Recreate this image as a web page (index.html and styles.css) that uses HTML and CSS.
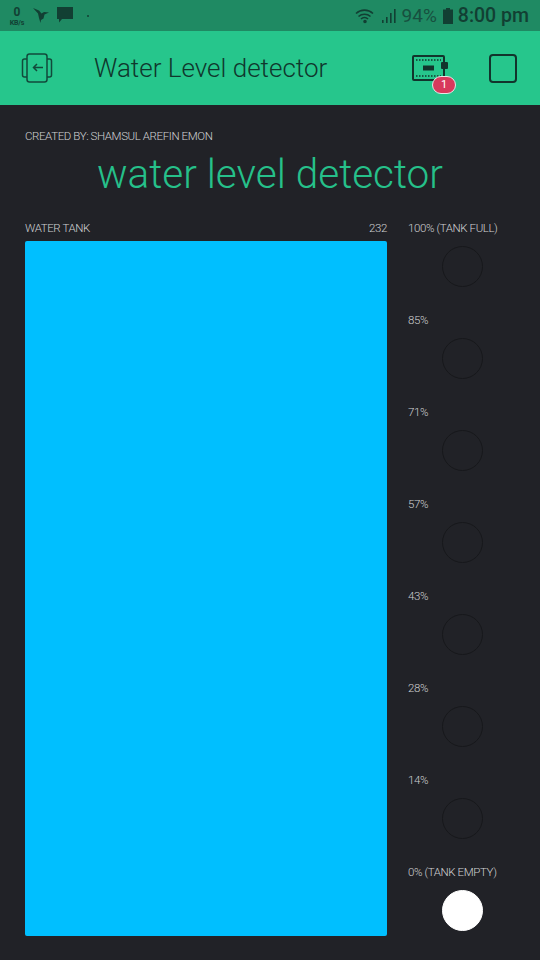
FILE: index.html
```html
<!DOCTYPE html>
<html lang="en">
<head>
<meta charset="utf-8">
<title>Water Level detector</title>
<link rel="stylesheet" href="styles.css">
</head>
<body>
<div class="status">
  <div class="status-left">
    <div class="kbs"><span class="kbs-num">0</span><span class="kbs-unit">KB/s</span></div>
    <svg class="ic-bird" width="16" height="15" viewBox="0 0 16 15"><path d="M0 0l6 2.500 2.500 3L11 4l5 .5-4.500 2-1 4-2.500 1.500-.5 3-1.500-5L5 5.500z" fill="#123f33"/></svg>
    <svg class="ic-msg" width="16" height="16" viewBox="0 0 16 16"><path d="M0 0h16v12H5l-3 3.500V12H0z" fill="#123f33"/></svg>
    <span class="dot"></span>
  </div>
  <div class="status-right">
    <svg class="ic-wifi" width="20" height="16" viewBox="0 0 20 16" fill="none" stroke="#123f33" stroke-width="1.600"><path d="M1 5.500a12.500 12.500 0 0 1 17 0M3.500 8.500a9 9 0 0 1 12 0M6 11a5 5 0 0 1 7 0"/><circle cx="10" cy="13.500" r="1" fill="#123f33"/></svg>
    <svg class="ic-signal" width="15" height="16" viewBox="0 0 15 16" fill="#123f33"><rect x="0" y="12" width="1.600" height="3"/><rect x="4" y="9" width="1.600" height="6"/><rect x="8" y="5" width="1.600" height="10"/><rect x="12" y="1" width="1.600" height="14"/></svg>
    <span class="pct">94%</span>
    <svg class="ic-batt" width="10" height="16" viewBox="0 0 10 16"><path d="M3 0h4v1.500h3V16H0V1.500h3z" fill="#123f33"/></svg>
    <span class="clock">8:00 pm</span>
  </div>
</div>

<header class="bar">
  <svg class="ic-back" width="32" height="30" viewBox="0 0 32 30" fill="none" stroke="#124a3b" stroke-width="1.500">
    <path d="M6 6H3.500Q1.500 6 1.500 8V22Q1.500 24 3.500 24H6"/>
    <path d="M26 6h2.500Q30.500 6 30.500 8V22Q30.500 24 28.500 24H26"/>
    <rect x="6" y="1" width="20" height="28" rx="2.500"/>
    <path d="M22 14.500H12.500M16 11l-3.500 3.500L16 18"/>
  </svg>
  <h1 class="title">Water Level detector</h1>
  <div class="device">
    <svg width="36" height="26" viewBox="0 0 36 26" fill="none">
      <rect x="1" y="1" width="31" height="24" rx="1" stroke="#12342c" stroke-width="2"/>
      <path d="M4 5h25M4 21h25" stroke="#12342c" stroke-width="1.500" stroke-dasharray="1.500 1.500"/>
      <rect x="11" y="10.500" width="11" height="5" fill="#12342c"/>
      <rect x="29" y="7" width="7" height="7" rx="1" fill="#12342c"/>
    </svg>
    <span class="badge">1</span>
  </div>
  <span class="square"></span>
</header>

<main class="canvas">
  <p class="label">CREATED BY: SHAMSUL AREFIN EMON</p>
  <h2 class="big">water level detector</h2>
  <div class="panels">
    <section class="tank">
      <div class="label-row"><span class="label">WATER TANK</span><span class="label">232</span></div>
      <div class="fill"></div>
    </section>
    <section class="leds">
      <div class="led-item"><span class="label">100% (TANK FULL)</span><span class="led"></span></div>
      <div class="led-item"><span class="label">85%</span><span class="led"></span></div>
      <div class="led-item"><span class="label">71%</span><span class="led"></span></div>
      <div class="led-item"><span class="label">57%</span><span class="led"></span></div>
      <div class="led-item"><span class="label">43%</span><span class="led"></span></div>
      <div class="led-item"><span class="label">28%</span><span class="led"></span></div>
      <div class="led-item"><span class="label">14%</span><span class="led"></span></div>
      <div class="led-item"><span class="label">0% (TANK EMPTY)</span><span class="led on"></span></div>
    </section>
  </div>
</main>
</body>
</html>
```

FILE: styles.css
```css
* { box-sizing: border-box; }
html, body { margin: 0; padding: 0; }
body {
  width: 540px;
  height: 960px;
  overflow: hidden;
  background: #212227;
  font-family: "Roboto", "Liberation Sans", sans-serif;
}
.status {
  height: 31px;
  background: #1f8a63;
  display: flex;
  justify-content: space-between;
  align-items: center;
  padding: 0 11px 0 7px;
  color: #123f33;
}
.status-left, .status-right { display: flex; align-items: center; }
.kbs { display: flex; flex-direction: column; align-items: center; width: 20px; font-weight: 700; margin-top: 1px; }
.kbs-num { font-size: 12px; line-height: 12px; }
.kbs-unit { font-size: 7px; line-height: 6px; margin-top: 2px; letter-spacing: -0.2px; }
.ic-bird { margin-left: 6px; margin-top: -1px; }
.ic-msg { margin-left: 8px; margin-top: -1px; }
.dot { width: 2px; height: 2px; margin-left: 14px; border-radius: 50%; background: #123f33; }
.ic-signal { margin-left: 7px; }
.pct { font-size: 19px; margin-left: 5px; color: #17503f; }
.ic-batt { margin-left: 6px; }
.clock { font-size: 19.500px; font-weight: 500; margin-left: 5px; }

.bar {
  height: 74px;
  background: #26c68c;
  display: flex;
  align-items: center;
  padding: 0 23px 0 21px;
}
.ic-back { flex: none; }
.title {
  margin: 0 0 0 41px;
  flex: 1;
  font-size: 26px;
  font-weight: 300;
  color: #10372d;
}
.device { position: relative; width: 36px; height: 26px; margin-right: 39px; left: -2px; }
.device svg { display: block; }
.badge {
  position: absolute;
  left: 20px;
  top: 21px;
  width: 24px;
  height: 18px;
  border-radius: 9px;
  border: 1px solid #e6e6e6;
  background: #d8395c;
  color: #fff;
  font-size: 11px;
  line-height: 16px;
  text-align: center;
}
.square {
  width: 28px;
  height: 29px;
  border: 2px solid #12342c;
  border-radius: 4px;
}

.canvas { padding: 24px 25px 0 25px; }
.label {
  margin: 0;
  font-size: 11.500px;
  line-height: 14px;
  letter-spacing: -0.4px;
  font-weight: 300;
  color: #cfd0d2;
}
.big {
  margin: 6px 0 0;
  text-align: center;
  font-size: 40.500px;
  line-height: 50px;
  font-weight: 300;
  color: #26c08a;
}
.panels { display: flex; gap: 21px; margin-top: 22px; }
.tank { width: 362px; flex: none; }
.label-row { display: flex; justify-content: space-between; height: 20px; }
.fill { height: 695px; background: #00bfff; border-radius: 2px; }
.leds { flex: 1; display: flex; flex-direction: column; }
.led-item { height: 92px; display: flex; flex-direction: column; }
.led {
  width: 41px;
  height: 41px;
  margin: 11px 0 0 34px;
  border-radius: 50%;
  border: 1px solid #17181b;
  background: #212227;
}
.led.on { background: #fff; border-color: #fff; }
```
